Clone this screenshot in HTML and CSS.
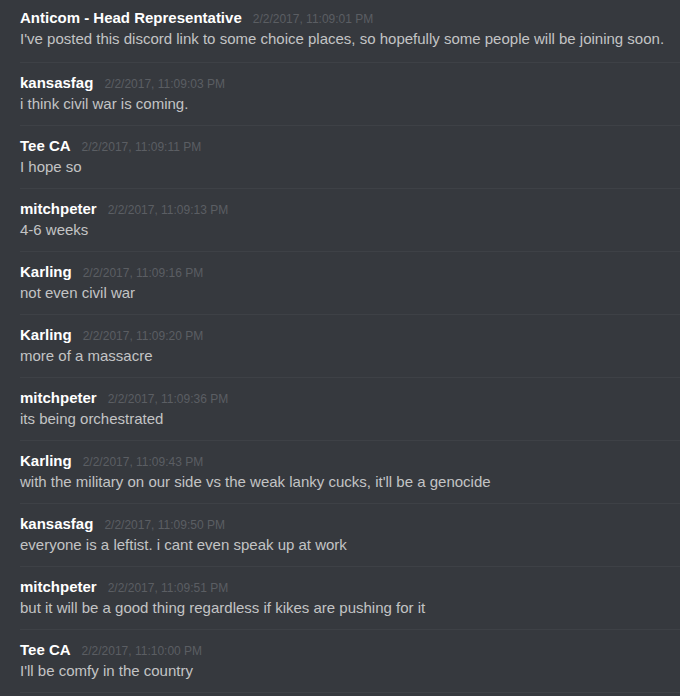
FILE: index.html
```html
<!DOCTYPE html>
<html lang="en">
<head>
    <meta charset="UTF-8">
    <meta name="viewport" content="width=device-width, initial-scale=1.0">
    <title>Chat log</title>
    <link rel="stylesheet" href="styles.css">
</head>
<body>
    <div id="log">
        <div class="msg first">
            <div class="head"><span class="user">Anticom - Head Representative</span><span class="time">2/2/2017, 11:09:01 PM</span></div>
            <div class="text">I've posted this discord link to some choice places, so hopefully some people will be joining soon.</div>
        </div>
        <div class="msg">
            <div class="head"><span class="user">kansasfag</span><span class="time">2/2/2017, 11:09:03 PM</span></div>
            <div class="text">i think civil war is coming.</div>
        </div>
        <div class="msg">
            <div class="head"><span class="user">Tee CA</span><span class="time">2/2/2017, 11:09:11 PM</span></div>
            <div class="text">I hope so</div>
        </div>
        <div class="msg">
            <div class="head"><span class="user">mitchpeter</span><span class="time">2/2/2017, 11:09:13 PM</span></div>
            <div class="text">4-6 weeks</div>
        </div>
        <div class="msg">
            <div class="head"><span class="user">Karling</span><span class="time">2/2/2017, 11:09:16 PM</span></div>
            <div class="text">not even civil war</div>
        </div>
        <div class="msg">
            <div class="head"><span class="user">Karling</span><span class="time">2/2/2017, 11:09:20 PM</span></div>
            <div class="text">more of a massacre</div>
        </div>
        <div class="msg">
            <div class="head"><span class="user">mitchpeter</span><span class="time">2/2/2017, 11:09:36 PM</span></div>
            <div class="text">its being orchestrated</div>
        </div>
        <div class="msg">
            <div class="head"><span class="user">Karling</span><span class="time">2/2/2017, 11:09:43 PM</span></div>
            <div class="text">with the military on our side vs the weak lanky cucks, it'll be a genocide</div>
        </div>
        <div class="msg">
            <div class="head"><span class="user">kansasfag</span><span class="time">2/2/2017, 11:09:50 PM</span></div>
            <div class="text">everyone is a leftist. i cant even speak up at work</div>
        </div>
        <div class="msg">
            <div class="head"><span class="user">mitchpeter</span><span class="time">2/2/2017, 11:09:51 PM</span></div>
            <div class="text">but it will be a good thing regardless if kikes are pushing for it</div>
        </div>
        <div class="msg">
            <div class="head"><span class="user">Tee CA</span><span class="time">2/2/2017, 11:10:00 PM</span></div>
            <div class="text">I'll be comfy in the country</div>
        </div>
    </div>
</body>
</html>
```

FILE: styles.css
```css
html, body {
    margin: 0;
    padding: 0;
    background: #36393e;
}
body {
    font-family: "Liberation Sans", Arial, sans-serif;
    overflow: hidden;
}
#log {
    padding-left: 20px;
}
.msg {
    padding: 10px 0 10px 0;
    border-bottom: 1px solid #3e4146;
}
.msg.first {
    padding-top: 8px;
    padding-bottom: 12px;
}
.head {
    display: flex;
    align-items: baseline;
    height: 20px;
    line-height: 20px;
    font-size: 15px;
    white-space: nowrap;
}
.user {
    color: #ffffff;
    font-weight: bold;
}
.time {
    color: #5b5e63;
    font-size: 12px;
    margin-left: 11px;
}
.text {
    color: #c3c4c5;
    font-size: 15px;
    height: 22px;
    line-height: 22px;
    white-space: nowrap;
}
```
